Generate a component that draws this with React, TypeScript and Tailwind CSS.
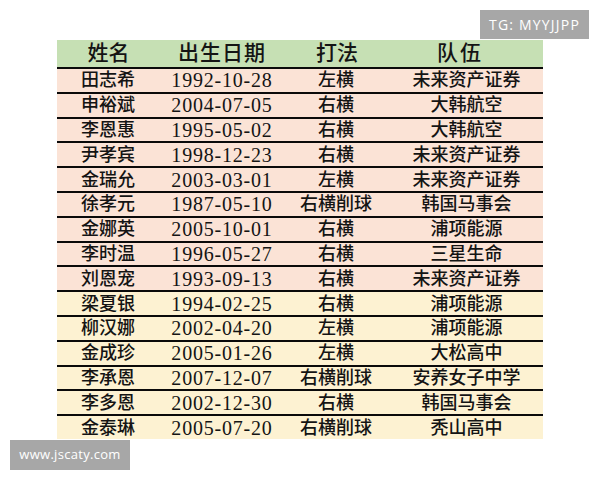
import React from "react";

type Row = { name: string; date: string; style: string; team: string };

const rows: Row[] = [
  { name: "田志希", date: "1992-10-28", style: "左横", team: "未来资产证券" },
  { name: "申裕斌", date: "2004-07-05", style: "右横", team: "大韩航空" },
  { name: "李恩惠", date: "1995-05-02", style: "右横", team: "大韩航空" },
  { name: "尹孝宾", date: "1998-12-23", style: "右横", team: "未来资产证券" },
  { name: "金瑞允", date: "2003-03-01", style: "左横", team: "未来资产证券" },
  { name: "徐孝元", date: "1987-05-10", style: "右横削球", team: "韩国马事会" },
  { name: "金娜英", date: "2005-10-01", style: "右横", team: "浦项能源" },
  { name: "李时温", date: "1996-05-27", style: "右横", team: "三星生命" },
  { name: "刘恩宠", date: "1993-09-13", style: "右横", team: "未来资产证券" },
  { name: "梁夏银", date: "1994-02-25", style: "右横", team: "浦项能源" },
  { name: "柳汉娜", date: "2002-04-20", style: "左横", team: "浦项能源" },
  { name: "金成珍", date: "2005-01-26", style: "左横", team: "大松高中" },
  { name: "李承恩", date: "2007-12-07", style: "右横削球", team: "安养女子中学" },
  { name: "李多恩", date: "2002-12-30", style: "右横", team: "韩国马事会" },
  { name: "金泰琳", date: "2005-07-20", style: "右横削球", team: "秃山高中" },
];

const cjk = "font-['Liberation_Serif','Noto_Sans_CJK_SC',serif]";

export default function App() {
  return (
    <div className="relative w-[600px] h-[480px] bg-white overflow-hidden">
      <div className={`ml-[57px] pt-[40px] w-[486px] text-[#141414] ${cjk}`}>
        <div className="grid grid-cols-[102px_126px_102px_156px] h-[27px] bg-[#c6e0b4] items-center text-[21px] leading-none font-medium">
          <div className="text-center pl-[1px]">姓名</div>
          <div className="text-center tracking-[1px]">出生日期</div>
          <div className="text-center pl-[2px]">打法</div>
          <div className="text-center pr-[10px] tracking-[2px]">队伍</div>
        </div>
        {rows.map((r, i) => (
          <div
            key={i}
            className={`grid grid-cols-[102px_126px_102px_156px] h-[24.8px] border-t-2 border-[#0a0a0a] items-center leading-none ${
              i < 9 ? "bg-[#fbe3d6]" : "bg-[#fdf2d2]"
            }`}
          >
            <div className="text-center text-[18px] font-medium">{r.name}</div>
            <div className="text-center text-[20px] tracking-[0.8px]">{r.date}</div>
            <div className="text-center text-[18px] font-medium">{r.style}</div>
            <div className="text-center text-[18px] pl-[3px] font-medium">{r.team}</div>
          </div>
        ))}
      </div>

      <div className="absolute left-[480px] top-[10px] w-[109px] h-[29px] bg-[#a7a7a7] flex items-center justify-center text-white text-[14px] tracking-[1.2px] font-medium font-['Open_Sans',sans-serif]">
        TG: MYYJJPP
      </div>
      <div className="absolute left-[10px] top-[440px] w-[120px] h-[30px] bg-[#a7a7a7] flex items-center justify-center text-white text-[13px] tracking-[0.3px] font-medium font-['Open_Sans',sans-serif]">
        www.jscaty.com
      </div>
    </div>
  );
}
